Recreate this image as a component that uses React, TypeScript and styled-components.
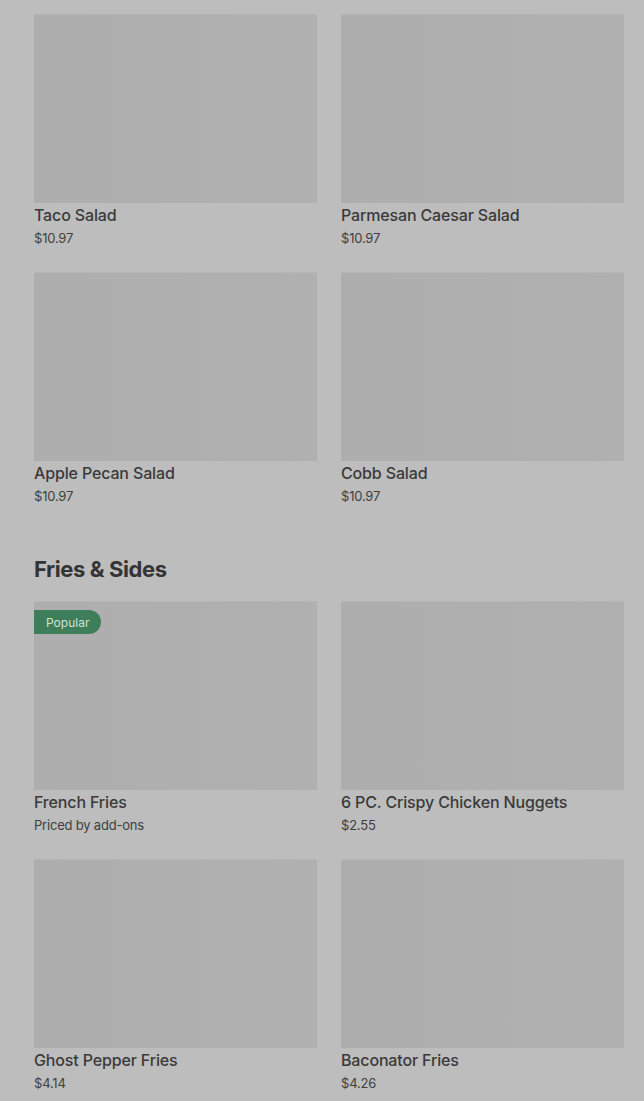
import React from "react";
import styled, { createGlobalStyle } from "styled-components";

const GlobalStyle = createGlobalStyle`
  html, body {
    margin: 0;
    padding: 0;
    background: #bdbdbd;
  }
  body {
    font-family: Inter, Roboto, "Liberation Sans", sans-serif;
    color: #3b3b3b;
  }
`;

const Page = styled.div`
  padding: 14px 20px 20px 34px;
  background: #bdbdbd;
`;

const Section = styled.section`
  & + & {
    margin-top: 50px;
  }
`;

const Heading = styled.h2`
  margin: 0 0 18px;
  font-size: 22px;
  line-height: 28px;
  font-weight: 700;
  letter-spacing: -0.4px;
  color: #343434;
`;

const Grid = styled.div`
  display: grid;
  grid-template-columns: 283px 283px;
  column-gap: 24px;
  row-gap: 25px;
`;

const Card = styled.div`
  display: flex;
  flex-direction: column;
`;

const Thumb = styled.div`
  position: relative;
  height: 188px;
  background: linear-gradient(90deg, #aeaeae 0%, #b0b0b0 100%);
  border-top: 1px solid #b5b5b5;
`;

const Badge = styled.span`
  position: absolute;
  top: 8px;
  left: 0;
  height: 24px;
  padding: 0 12px;
  display: flex;
  align-items: center;
  background: #3e7e5b;
  color: #cfe0d4;
  font-size: 12px;
  border-radius: 0 12px 12px 0;
`;

const Title = styled.div`
  margin-top: 2px;
  font-size: 16px;
  line-height: 20px;
  font-weight: 500;
  letter-spacing: -0.15px;
  color: #3a3a3a;
`;

const Price = styled.div`
  margin-top: 4px;
  font-size: 13px;
  line-height: 18px;
  letter-spacing: -0.2px;
  color: #3f3f3f;
`;

type Item = { name: string; price: string; popular?: boolean };

const salads: Item[] = [
  { name: "Taco Salad", price: "$10.97" },
  { name: "Parmesan Caesar Salad", price: "$10.97" },
  { name: "Apple Pecan Salad", price: "$10.97" },
  { name: "Cobb Salad", price: "$10.97" },
];

const sides: Item[] = [
  { name: "French Fries", price: "Priced by add-ons", popular: true },
  { name: "6 PC. Crispy Chicken Nuggets", price: "$2.55" },
  { name: "Ghost Pepper Fries", price: "$4.14" },
  { name: "Baconator Fries", price: "$4.26" },
];

const ItemCard = ({ item }: { item: Item }) => (
  <Card>
    <Thumb>{item.popular && <Badge>Popular</Badge>}</Thumb>
    <Title>{item.name}</Title>
    <Price>{item.price}</Price>
  </Card>
);

export default function App() {
  return (
    <>
      <GlobalStyle />
      <Page>
        <Section>
          <Grid>
            {salads.map((s) => (
              <ItemCard key={s.name} item={s} />
            ))}
          </Grid>
        </Section>
        <Section>
          <Heading>Fries &amp; Sides</Heading>
          <Grid>
            {sides.map((s) => (
              <ItemCard key={s.name} item={s} />
            ))}
          </Grid>
        </Section>
      </Page>
    </>
  );
}
